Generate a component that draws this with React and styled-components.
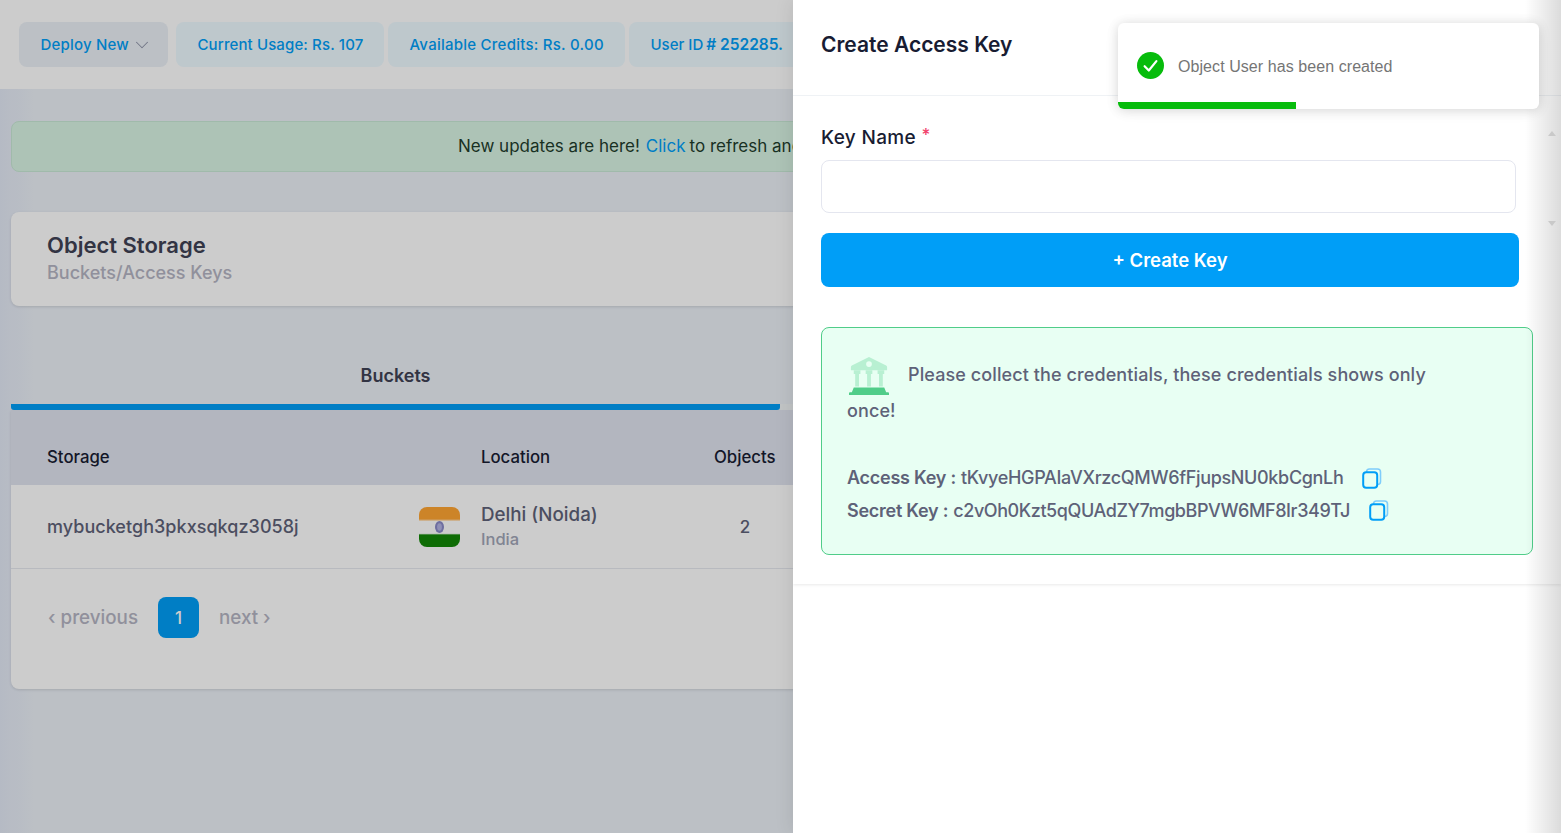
import React from "react"
import styled, { createGlobalStyle } from "styled-components"
import { ChevronDown } from "lucide-react"

const font = `Inter, "Noto Sans", sans-serif`

const GlobalStyle = createGlobalStyle`
  html, body {
    margin: 0;
    height: 100%;
    overflow: hidden;
    font-family: ${font};
    background: #ebf0f7;
  }
  * { box-sizing: border-box; }
`

const Page = styled.div`
  position: relative;
  width: 100%;
  height: 100vh;
  overflow: hidden;
  background: linear-gradient(to right, #e3e9f6 0, #ebf0f7 34px);
`
const TopBar = styled.header`
  height: 89px;
  background: #fff;
  display: flex;
  align-items: center;
  gap: 4px;
  padding: 0 0 0 19px;
`
const TopButton = styled.div`
  width: ${p => p.$w}px;
  height: 45px;
  flex: none;
  margin-right: ${p => (p.$first ? 4 : 0)}px;
  padding-left: 21.5px;
  display: flex;
  align-items: center;
  border-radius: 8px;
  background: ${p => (p.$first ? "#ebf1f7" : "#eefaff")};
  color: #009ef7;
  font-size: 15px;
  font-weight: 500;
  white-space: nowrap;
  letter-spacing: ${p => p.$ls || 0}px;
  svg { color: #8f93a8; margin-left: 2px; }
  b { font-weight: 600; font-size: 15.5px; margin-left: 3px; }
`
const Content = styled.main`
  padding: 32px 0 0 11px;
`
const Alert = styled.div`
  height: 51px;
  padding: 0 0 2px 446px;
  display: flex;
  align-items: center;
  border: 1px solid #c9e9d6;
  border-radius: 8px;
  background: #d9f4e4;
  color: #1f3d2c;
  font-size: 17px;
  white-space: nowrap;
  a { color: #009ef7; margin: 0 4px 0 6px; }
`
const TitleCard = styled.section`
  height: 94px;
  margin-top: 40px;
  padding: 19px 36px;
  border-radius: 8px;
  background: #fff;
  box-shadow: 0 1px 3px rgba(0, 0, 0, 0.12);
`
const PageTitle = styled.h1`
  margin: 0;
  font-size: 22px;
  line-height: 28px;
  font-weight: 600;
  color: #3f4254;
`
const PageSub = styled.div`
  font-size: 18px;
  line-height: 27px;
  font-weight: 500;
  color: #b5b5c3;
`
const TabBar = styled.div`
  height: 104px;
  display: grid;
  grid-template-columns: 769px 1fr;
  align-items: end;
`
const Tab = styled.div`
  height: 50px;
  text-align: center;
  font-size: 18px;
  font-weight: 600;
  color: #3f4254;
  line-height: 32px;
  padding-bottom: 18px;
  border-bottom: 6px solid ${p => (p.$active ? "#009ef7" : "#f2f6f7")};
  border-radius: ${p => (p.$active ? "3px" : "0")};
`
const TableCard = styled.section`
  height: 279px;
  border-radius: 0 0 8px 8px;
  background: #fff;
  box-shadow: 0 1px 3px rgba(0, 0, 0, 0.12);
  overflow: hidden;
`
const TableRow = styled.div`
  display: grid;
  grid-template-columns: 372px 62px 233px 62px 1fr;
  align-items: center;
  padding-left: 36px;
  height: ${p => (p.$head ? 75 : 84)}px;
  padding-top: ${p => (p.$head ? 19 : 0)}px;
  background: ${p => (p.$head ? "#e0e4ef" : "#fff")};
  border-bottom: ${p => (p.$head ? "none" : "1px solid #e6e9ef")};
`
const HeadCell = styled.div`
  grid-column: ${p => p.$col};
  font-size: 16.8px;
  font-weight: 500;
  color: #181c32;
  white-space: nowrap;
`
const BucketName = styled.div`
  font-size: 18px;
  font-weight: 500;
  color: #5e6278;
  letter-spacing: 0.04px;
`
const Place = styled.div`
  font-size: 18.8px;
  font-weight: 500;
  line-height: 25px;
  color: #5e6278;
  small {
    display: block;
    font-size: 16.5px;
    color: #a1a5b7;
  }
`
const Count = styled.div`
  text-align: center;
  font-size: 17px;
  font-weight: 500;
  color: #5e6278;
`
const Pager = styled.nav`
  display: flex;
  align-items: center;
  gap: 20px;
  padding: 28px 0 0 37px;
  font-size: 18.8px;
  font-weight: 500;
  color: #b5b5c3;
`
const PageNum = styled.div`
  width: 41px;
  height: 41px;
  border-radius: 8px;
  background: #009ef7;
  color: #fff;
  display: grid;
  place-items: center;
  font-size: 17px;
`
const Scrim = styled.div`
  position: absolute;
  inset: 0;
  background: rgba(0, 0, 0, 0.2);
`
const Drawer = styled.aside`
  position: absolute;
  top: 0;
  right: 0;
  bottom: 0;
  width: 768px;
  background: #fff;
  box-shadow: 0 0 18px rgba(0, 0, 0, 0.1);
  overflow: hidden;
  &::after {
    content: "";
    position: absolute;
    top: 0;
    right: 0;
    bottom: 0;
    width: 36px;
    background: linear-gradient(to right, rgba(0, 0, 0, 0), rgba(0, 0, 0, 0.14));
  }
`
const DrawerCard = styled.div`
  height: 584px;
  box-shadow: 0 1px 3px rgba(0, 0, 0, 0.09);
`
const DrawerHead = styled.div`
  height: 96px;
  padding: 29px 0 0 28px;
  border-bottom: 1px solid #eff2f5;
`
const DrawerTitle = styled.h2`
  margin: 0;
  font-size: 21px;
  line-height: 32px;
  font-weight: 600;
  color: #181c32;
`
const DrawerBody = styled.div`
  padding: 28px 28px 0;
`
const Label = styled.label`
  display: block;
  height: 28px;
  font-size: 19px;
  line-height: 28px;
  font-weight: 500;
  color: #181c32;
  letter-spacing: 0.35px;
  span { color: #f1416c; font-size: 17px; line-height: 0; vertical-align: 3px; }
`
const KeyInput = styled.input`
  display: block;
  width: 695px;
  height: 53px;
  margin-top: 8px;
  border: 1px solid #e4e6ef;
  border-radius: 8px;
  outline: none;
  background: #fff;
`
const CreateButton = styled.button`
  display: block;
  width: 698px;
  height: 54px;
  margin-top: 20px;
  border: none;
  border-radius: 8px;
  background: #009ef7;
  color: #fff;
  font-family: ${font};
  font-size: 18.5px;
  font-weight: 600;
`
const Notice = styled.div`
  width: 712px;
  height: 228px;
  margin-top: 40px;
  padding: 28.5px 0 0 25px;
  border: 1px solid #50cd89;
  border-radius: 8px;
  background: #e8fff3;
  color: #5e6278;
  font-size: 18px;
  font-weight: 500;
  line-height: 36px;
  letter-spacing: 0.1px;
`
const NoticeIcon = styled.svg`
  width: 44px;
  height: 40px;
  margin: -4px 17px -4px 0;
  vertical-align: middle;
`
const KeyLines = styled.div`
  margin-top: 33.5px;
  line-height: 32.5px;
  white-space: nowrap;
  display: flex;
  flex-direction: column;
`
const KeyLine = styled.div`
  display: flex;
  align-items: center;
  b { font-weight: 600; margin-right: 5px; letter-spacing: -0.25px; }
`
const KeyValue = styled.span`
  letter-spacing: ${p => p.$ls}px;
`
const CopyIcon = styled.svg`
  width: 20px;
  height: 21px;
  margin-left: ${p => p.$gap}px;
`
const Toast = styled.div`
  position: absolute;
  top: 23px;
  right: 22px;
  width: 421px;
  height: 86px;
  z-index: 5;
  padding: 0 0 0 19px;
  display: flex;
  align-items: center;
  gap: 14px;
  border-radius: 6px;
  background: #fff;
  box-shadow: 0 1px 12px rgba(0, 0, 0, 0.12), 0 2px 16px rgba(0, 0, 0, 0.06);
  overflow: hidden;
  color: #757575;
  font-family: "Liberation Sans", Arial, sans-serif;
  font-size: 16px;
  svg { flex: none; margin-top: -1px; }
`
const ToastText = styled.span`
  margin-top: 2px;
  letter-spacing: 0.07px;
`
const ToastBar = styled.div`
  position: absolute;
  left: 0;
  bottom: 0;
  height: 7px;
  background: #07bc0c;
`
const SpinArrow = styled.i`
  position: absolute;
  right: 5px;
  top: ${p => p.$top}px;
  z-index: 2;
  width: 0;
  height: 0;
  border-left: 4px solid transparent;
  border-right: 4px solid transparent;
  ${p => (p.$down ? "border-top" : "border-bottom")}: 5px solid #c9c9c9;
`

const BankIcon = () => (
  <NoticeIcon viewBox="0 0 44 42">
    <path d="M22 1 L40 10 a2 2 0 0 1 1 2 v3 H3 v-3 a2 2 0 0 1 1-2 Z" fill="#b8f0d2" />
    <circle cx="22" cy="8.5" r="3" fill="#e8fff3" />
    <path d="M6 15h7v4h-1.5v13h-4V19H6zM18.5 15h7v4H24v13h-4V19h-1.5zM31 15h7v4h-1.5v13h-4V19H31z" fill="#b8f0d2" />
    <path d="M6 33h32l2 5h2a1 1 0 0 1 1 1v2H1v-2a1 1 0 0 1 1-1h2z" fill="#50cd89" />
  </NoticeIcon>
)

const Copy = ({ gap }) => (
  <CopyIcon $gap={gap} viewBox="0 0 20 21">
    <rect x="4.5" y="1" width="14" height="15.5" rx="3" fill="none" stroke="#7fcdfb" strokeWidth="1.6" />
    <rect x="1.2" y="4.2" width="14" height="15.6" rx="3" fill="#e8fff3" stroke="#009ef7" strokeWidth="2" />
  </CopyIcon>
)

const Flag = () => (
  <svg width="41" height="40" viewBox="0 0 41 40">
    <defs>
      <linearGradient id="tricolor" x1="0" y1="0" x2="0" y2="1">
        <stop offset="0.3" stopColor="#ffa533" />
        <stop offset="0.36" stopColor="#ffffff" />
        <stop offset="0.66" stopColor="#ffffff" />
        <stop offset="0.7" stopColor="#128807" />
      </linearGradient>
    </defs>
    <rect width="41" height="40" rx="8" fill="url(#tricolor)" />
    <ellipse cx="20.5" cy="20" rx="4.5" ry="6" fill="#8a8ac8" />
    <ellipse cx="20.5" cy="20" rx="2.4" ry="3.8" fill="#b4b4e4" />
  </svg>
)

const ToastCheck = () => (
  <svg width="27" height="27" viewBox="0 0 27 27">
    <circle cx="13.5" cy="13.5" r="13.5" fill="#07bc0c" />
    <path d="M7.6 14.2l4.2 4.3 7.6-9.4" fill="none" stroke="#fff" strokeWidth="2.2" strokeLinecap="round" strokeLinejoin="round" />
  </svg>
)

const App = () => (
  <Page>
    <GlobalStyle />
    <TopBar>
      <TopButton $first $w={149} $ls={0.2}>
        Deploy New
        <ChevronDown size={22} strokeWidth={1.1} />
      </TopButton>
      <TopButton $w={208} $ls={0.12}>Current Usage: Rs. 107</TopButton>
      <TopButton $w={237} $ls={0.25}>Available Credits: Rs. 0.00</TopButton>
      <TopButton $w={190}>
        User ID <b># 252285.</b>
      </TopButton>
    </TopBar>
    <Content>
      <Alert>
        New updates are here!<a>Click</a>to refresh and
      </Alert>
      <TitleCard>
        <PageTitle>Object Storage</PageTitle>
        <PageSub>Buckets/Access Keys</PageSub>
      </TitleCard>
      <TabBar>
        <Tab $active>Buckets</Tab>
        <Tab />
      </TabBar>
      <TableCard>
        <TableRow $head>
          <HeadCell $col="1 / span 2">Storage</HeadCell>
          <HeadCell $col="3">Location</HeadCell>
          <HeadCell $col="4">Objects</HeadCell>
        </TableRow>
        <TableRow>
          <BucketName>mybucketgh3pkxsqkqz3058j</BucketName>
          <Flag />
          <Place>
            Delhi (Noida)
            <small>India</small>
          </Place>
          <Count>2</Count>
        </TableRow>
        <Pager>
          <span>‹ previous</span>
          <PageNum>1</PageNum>
          <span>next ›</span>
        </Pager>
      </TableCard>
    </Content>
    <Scrim />
    <Drawer>
      <SpinArrow $top={131} />
      <SpinArrow $top={221} $down />
      <Toast>
        <ToastCheck />
        <ToastText>Object User has been created</ToastText>
        <ToastBar style={{ width: `${(178 / 421) * 100}%` }} />
      </Toast>
      <DrawerCard>
        <DrawerHead>
          <DrawerTitle>Create Access Key</DrawerTitle>
        </DrawerHead>
        <DrawerBody>
          <Label>
            Key Name <span>*</span>
          </Label>
          <KeyInput />
          <CreateButton>+ Create Key</CreateButton>
          <Notice>
            <BankIcon />
            Please collect the credentials, these credentials shows only
            <br />
            once!
            <KeyLines>
              <KeyLine>
                <b>Access Key :</b>
                <KeyValue $ls={-0.33}>tKvyeHGPAIaVXrzcQMW6fFjupsNU0kbCgnLh</KeyValue>
                <Copy gap={19} />
              </KeyLine>
              <KeyLine>
                <b>Secret Key :</b>
                <KeyValue $ls={-0.42}>c2vOh0Kzt5qQUAdZY7mgbBPVW6MF8Ir349TJ</KeyValue>
                <Copy gap={19} />
              </KeyLine>
            </KeyLines>
          </Notice>
        </DrawerBody>
      </DrawerCard>
    </Drawer>
  </Page>
)

export default App
